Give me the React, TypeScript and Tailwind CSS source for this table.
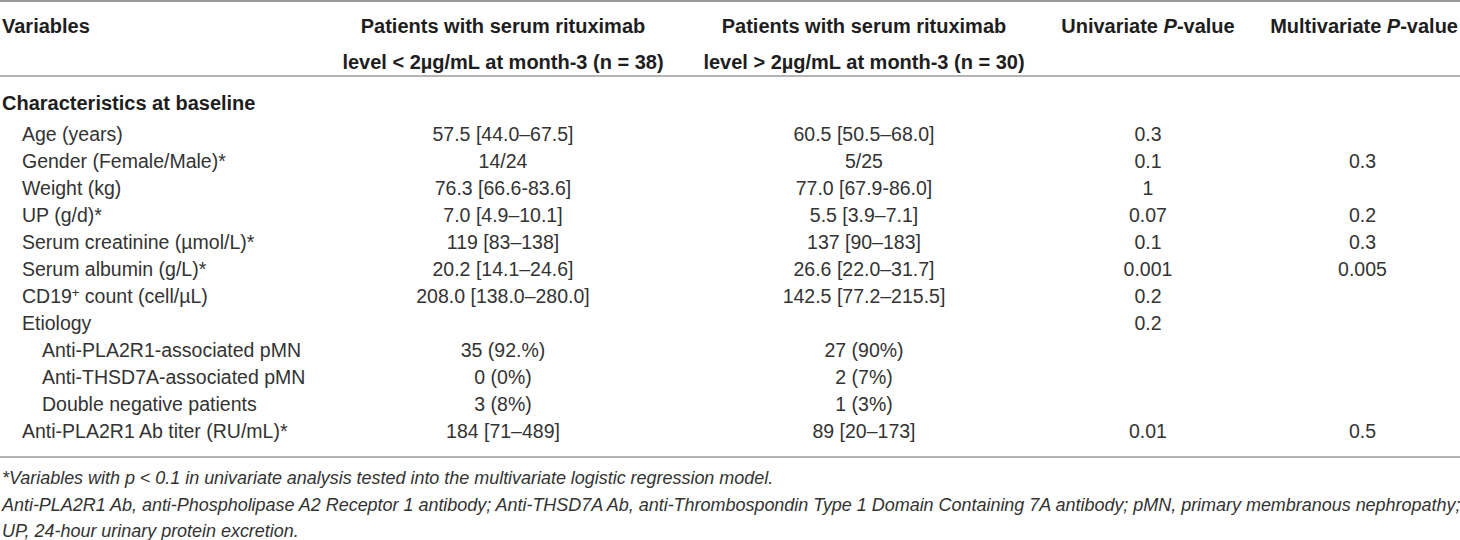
import React from "react";

type Row = {
  label: React.ReactNode;
  indent: 1 | 2;
  a?: string;
  b?: string;
  u?: string;
  m?: string;
};

const rows: Row[] = [
  { label: "Age (years)", indent: 1, a: "57.5 [44.0–67.5]", b: "60.5 [50.5–68.0]", u: "0.3" },
  { label: "Gender (Female/Male)*", indent: 1, a: "14/24", b: "5/25", u: "0.1", m: "0.3" },
  { label: "Weight (kg)", indent: 1, a: "76.3 [66.6-83.6]", b: "77.0 [67.9-86.0]", u: "1" },
  { label: "UP (g/d)*", indent: 1, a: "7.0 [4.9–10.1]", b: "5.5 [3.9–7.1]", u: "0.07", m: "0.2" },
  { label: "Serum creatinine (µmol/L)*", indent: 1, a: "119 [83–138]", b: "137 [90–183]", u: "0.1", m: "0.3" },
  { label: "Serum albumin (g/L)*", indent: 1, a: "20.2 [14.1–24.6]", b: "26.6 [22.0–31.7]", u: "0.001", m: "0.005" },
  {
    label: (
      <>
        CD19<sup className="text-[13px]">+</sup> count (cell/µL)
      </>
    ),
    indent: 1,
    a: "208.0 [138.0–280.0]",
    b: "142.5 [77.2–215.5]",
    u: "0.2",
  },
  { label: "Etiology", indent: 1, u: "0.2" },
  { label: "Anti-PLA2R1-associated pMN", indent: 2, a: "35 (92.%)", b: "27 (90%)" },
  { label: "Anti-THSD7A-associated pMN", indent: 2, a: "0 (0%)", b: "2 (7%)" },
  { label: "Double negative patients", indent: 2, a: "3 (8%)", b: "1 (3%)" },
  { label: "Anti-PLA2R1 Ab titer (RU/mL)*", indent: 1, a: "184 [71–489]", b: "89 [20–173]", u: "0.01", m: "0.5" },
];

const cols = "grid grid-cols-[313px_380px_342px_226px_199px]";

export default function App() {
  return (
    <div
      className="w-[1460px] h-[540px] bg-white overflow-hidden text-[#333333]"
      style={{ fontFamily: '"Liberation Sans", Arial, sans-serif' }}
    >
      <div className="border-t-2 border-[#9a9a9a]" />
      {/* Header */}
      <div className={`${cols} h-[75px] border-b-2 border-[#b4b4b4] font-bold text-[20px] text-[#1e1e1e] leading-[36px] pt-[6px]`}>
        <div className="pl-[2px]">Variables</div>
        <div className="text-center">
          Patients with serum rituximab
          <br />
          level &lt; 2µg/mL at month-3 (n = 38)
        </div>
        <div className="text-center">
          Patients with serum rituximab
          <br />
          level &gt; 2µg/mL at month-3 (n = 30)
        </div>
        <div className="text-center">
          Univariate <i>P</i>-value
        </div>
        <div className="text-right pr-[2px]">
          Multivariate <i>P</i>-value
        </div>
      </div>
      {/* Body */}
      <div className="border-b-2 border-[#b4b4b4] text-[19.5px] pb-[12px]">
        <div className="h-[27px] mt-[12px] flex items-center pl-[2px] font-bold text-[20px] text-[#1e1e1e]">
          Characteristics at baseline
        </div>
        <div className="mt-[4px]">
          {rows.map((r, i) => (
            <div key={i} className={`${cols} h-[27px] items-center`}>
              <div className={r.indent === 1 ? "pl-[22px]" : "pl-[42px]"}>{r.label}</div>
              <div className="text-center">{r.a ?? ""}</div>
              <div className="text-center">{r.b ?? ""}</div>
              <div className="text-center">{r.u ?? ""}</div>
              <div className="text-center pl-[4px]">{r.m ?? ""}</div>
            </div>
          ))}
        </div>
      </div>
      {/* Footnotes */}
      <div className="italic text-[18px] tracking-[-0.03px] leading-[26.5px] pl-[2px] pt-[7px] text-[#333333] whitespace-nowrap">
        <div>*Variables with p &lt; 0.1 in univariate analysis tested into the multivariate logistic regression model.</div>
        <div>
          Anti-PLA2R1 Ab, anti-Phospholipase A2 Receptor 1 antibody; Anti-THSD7A Ab, anti-Thrombospondin Type 1 Domain Containing 7A antibody; pMN, primary membranous nephropathy;
        </div>
        <div>UP, 24-hour urinary protein excretion.</div>
      </div>
    </div>
  );
}
